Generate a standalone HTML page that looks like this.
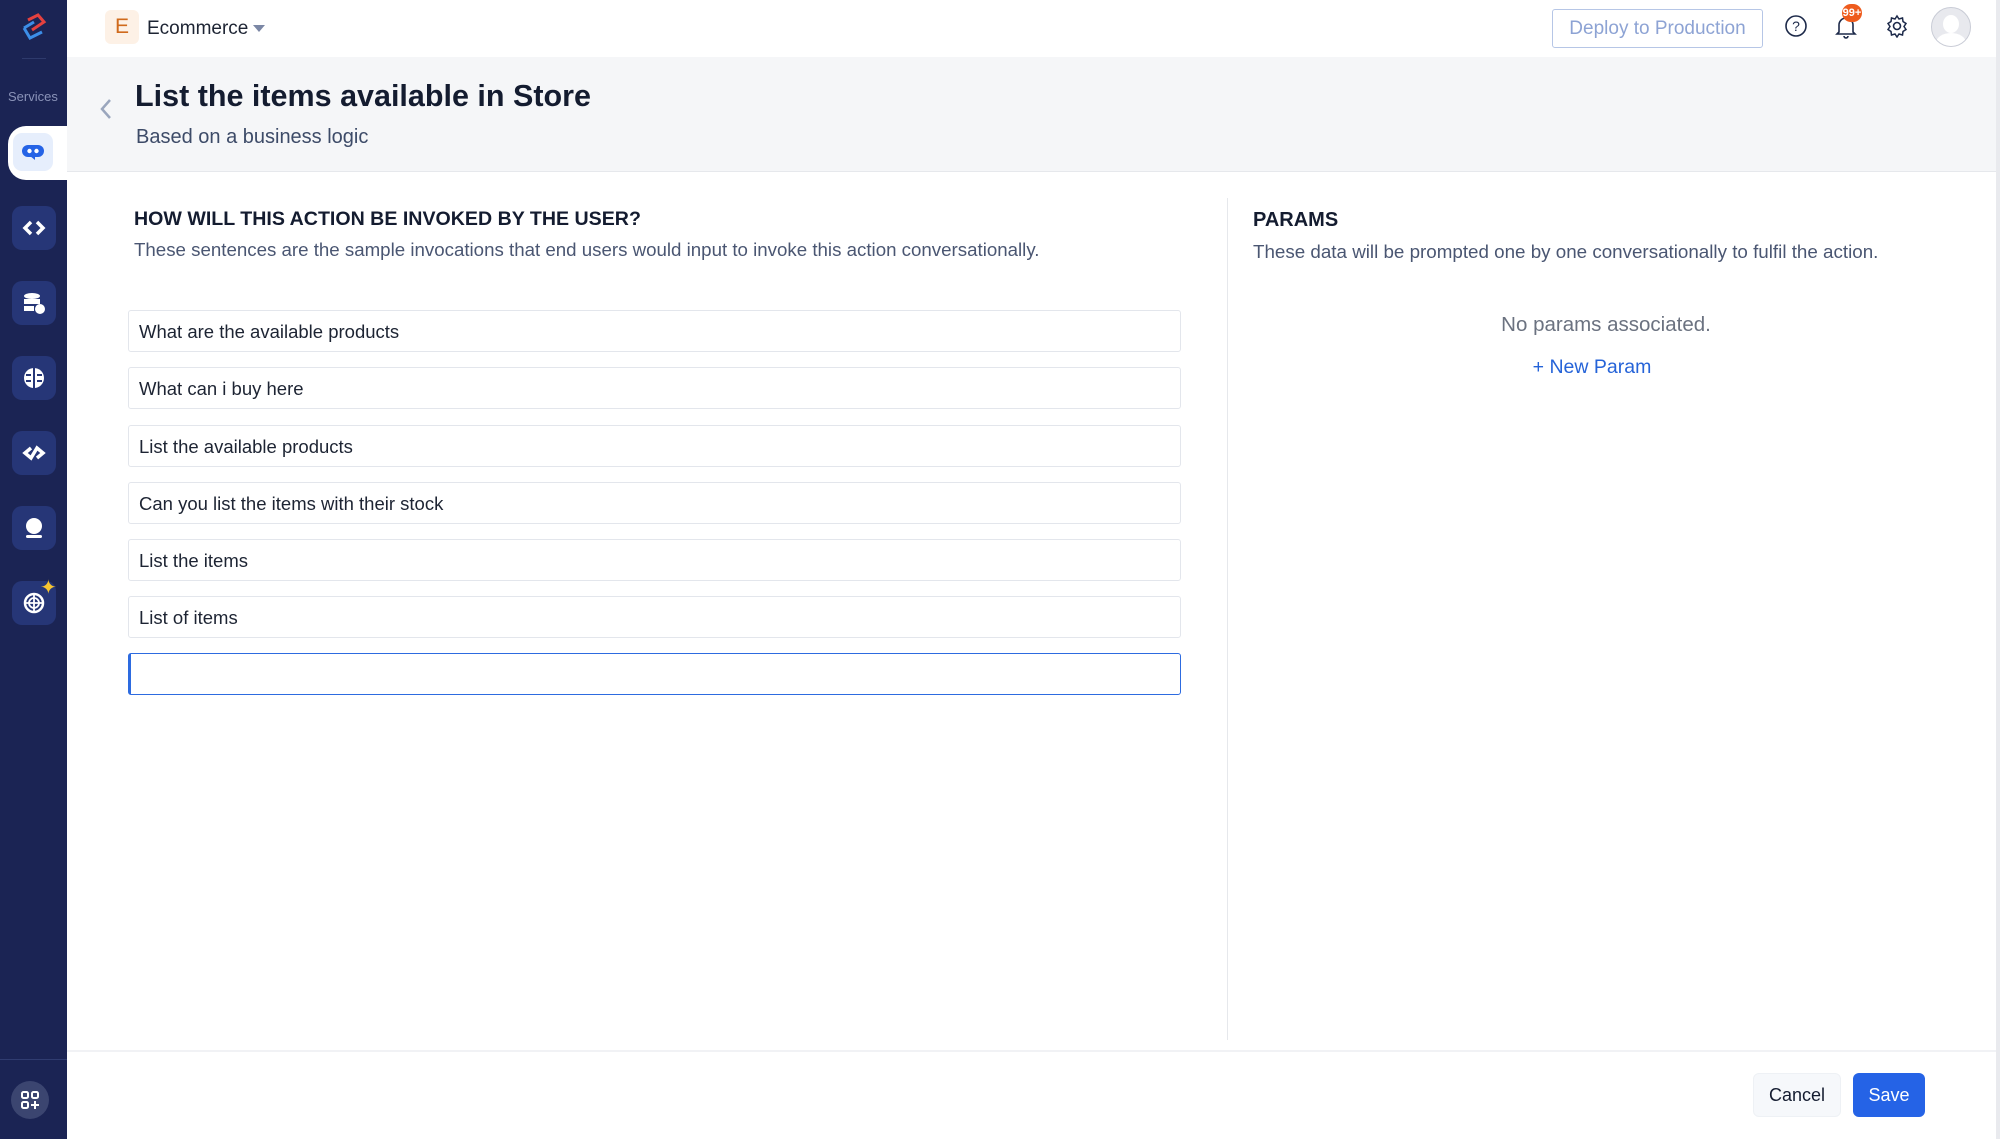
<!DOCTYPE html>
<html><head><meta charset="utf-8"><style>
*{box-sizing:border-box;margin:0;padding:0}
body{width:2000px;height:1139px;position:relative;overflow:hidden;background:#fff;font-family:"Liberation Sans",sans-serif;color:#1a2233}
.abs{position:absolute}
#side{left:0;top:0;width:67px;height:1139px;background:#1b2454}
.ib{position:absolute;left:12px;width:44px;height:44px;border-radius:10px;background:#263677;display:flex;align-items:center;justify-content:center}
.inp{position:absolute;left:128px;width:1053px;height:42px;border:1.5px solid #e3e6ec;border-radius:3px;font-size:18.5px;padding-left:10px;line-height:41px;color:#1d2433}
</style></head><body>
<div id="side" class="abs">
  <svg class="abs" style="left:18px;top:12px" width="32" height="32" viewBox="0 0 32 32"><path d="M10 8 L20 3 L26 10 L14 18" fill="none" stroke="#e4413f" stroke-width="3"/><path d="M6 16 L16 10 M6 16 L12 26 L24 20" fill="none" stroke="#3c8ee8" stroke-width="3"/></svg>
  <div class="abs" style="left:22px;top:58px;width:24px;height:1px;background:#2e3a6c"></div>
  <div class="abs" style="left:8px;top:89px;font-size:13px;color:#8a93b8">Services</div>
</div>
<div class="abs" style="left:8px;top:126px;width:60px;height:54px;background:#fff;border-radius:18px 0 0 18px"></div>
<div class="abs" style="left:13px;top:133px;width:40px;height:38px;border-radius:9px;background:#e6eefc;display:flex;align-items:center;justify-content:center">
<svg width="24" height="18" viewBox="0 0 24 18"><rect x="1" y="2" width="22" height="12" rx="6" fill="#2563e6"/><path d="M9 13 L14 17 L14 13Z" fill="#2563e6"/><circle cx="8.5" cy="8" r="2.2" fill="#fff"/><circle cx="15.5" cy="8" r="2.2" fill="#fff"/></svg></div>
<div class="ib" style="top:206px"><svg width="24" height="20" viewBox="0 0 24 20"><path d="M9 4 L3 10 L9 16 M15 4 L21 10 L15 16" fill="none" stroke="#fff" stroke-width="3.5"/></svg></div>
<div class="ib" style="top:281px"><svg width="26" height="24" viewBox="0 0 26 24"><ellipse cx="11" cy="5" rx="8" ry="3" fill="#fff"/><rect x="3" y="8" width="16" height="5" fill="#fff"/><rect x="3" y="15" width="10" height="5" fill="#fff"/><circle cx="19" cy="18" r="5" fill="#fff"/></svg></div>
<div class="ib" style="top:356px"><svg width="24" height="24" viewBox="0 0 24 24"><circle cx="12" cy="12" r="10" fill="#fff"/><path d="M12 2V22M4 9H9M15 9H20M4 15H9M15 15H20" stroke="#263677" stroke-width="2"/></svg></div>
<div class="ib" style="top:431px"><svg width="26" height="18" viewBox="0 0 26 18"><path d="M10 4 L4 9 L10 14 L16 4 L22 9 L16 14" fill="none" stroke="#fff" stroke-width="3.5"/></svg></div>
<div class="ib" style="top:506px"><svg width="24" height="24" viewBox="0 0 24 24"><circle cx="12" cy="10" r="8" fill="#fff"/><rect x="4" y="19" width="16" height="3" rx="1.5" fill="#fff"/></svg></div>
<div class="ib" style="top:581px"><svg width="24" height="24" viewBox="0 0 24 24"><circle cx="12" cy="12" r="9" fill="none" stroke="#fff" stroke-width="2.5"/><circle cx="12" cy="12" r="5" fill="none" stroke="#fff" stroke-width="1.8"/><path d="M3 12H21M12 3V21" stroke="#fff" stroke-width="1.8"/></svg></div>
<div class="abs" style="left:40px;top:575px;color:#f7c531;font-size:20px">✦</div>
<div class="abs" style="left:0;top:1059px;width:67px;height:1px;background:#303c70"></div>
<div class="abs" style="left:11px;top:1081px;width:38px;height:38px;border-radius:50%;background:#3b4570;display:flex;align-items:center;justify-content:center"><svg width="18" height="18" viewBox="0 0 18 18"><rect x="1" y="1" width="6" height="6" rx="1.5" fill="none" stroke="#fff" stroke-width="2"/><rect x="11" y="1" width="6" height="6" rx="1.5" fill="none" stroke="#fff" stroke-width="2"/><rect x="1" y="11" width="6" height="6" rx="1.5" fill="none" stroke="#fff" stroke-width="2"/><path d="M14 10V18M10 14H18" stroke="#fff" stroke-width="2"/></svg></div>

<div class="abs" style="left:105px;top:10px;width:34px;height:34px;border-radius:6px;background:#fdf1e6;color:#d06a1c;font-size:21px;text-align:center;line-height:34px">E</div>
<div class="abs" style="left:147px;top:18px;font-size:19px;color:#1d2433">Ecommerce</div>
<div class="abs" style="left:253px;top:25px;width:0;height:0;border-left:6px solid transparent;border-right:6px solid transparent;border-top:7px solid #7b87a5"></div>
<div class="abs" style="left:1552px;top:9px;width:211px;height:39px;border:1.5px solid #b6c6e6;border-radius:3px;color:#8da3d4;font-size:19px;text-align:center;line-height:38px">Deploy to Production</div>
<svg class="abs" style="left:1784px;top:14px" width="24" height="24" viewBox="0 0 24 24"><circle cx="12" cy="12" r="10" fill="none" stroke="#1d2a4a" stroke-width="1.6"/><text x="12" y="17" text-anchor="middle" font-size="14" font-family="Liberation Sans" fill="#1d2a4a">?</text></svg>
<svg class="abs" style="left:1834px;top:14px" width="24" height="26" viewBox="0 0 24 26"><path d="M5 18V11a7 7 0 0 1 14 0v7l2 2H3z M10 22a2 2 0 0 0 4 0" fill="none" stroke="#1d2a4a" stroke-width="1.6"/></svg>
<div class="abs" style="left:1842px;top:4px;width:20px;height:18px;border-radius:9px;background:#ee5b1d;color:#fff;font-size:11px;font-weight:bold;text-align:center;line-height:18px">99+</div>
<svg class="abs" style="left:1885px;top:14px" width="24" height="24" viewBox="0 0 24 24"><circle cx="12" cy="12" r="3.5" fill="none" stroke="#1d2a4a" stroke-width="1.6"/><path d="M12 2l2 3 3.5-1 .5 3.5 3 2-2 3 2 3-3 2-.5 3.5-3.5-1-2 3-2-3-3.5 1-.5-3.5-3-2 2-3-2-3 3-2 .5-3.5 3.5 1z" fill="none" stroke="#1d2a4a" stroke-width="1.5"/></svg>
<div class="abs" style="left:1931px;top:7px;width:40px;height:40px;border-radius:50%;background:#e8e9ee;border:1.5px solid #c9ccd6;overflow:hidden"><div class="abs" style="left:11px;top:7px;width:16px;height:18px;border-radius:50%;background:#fff"></div><div class="abs" style="left:4px;top:25px;width:30px;height:20px;border-radius:50%;background:#fff"></div></div>

<div class="abs" style="left:67px;top:57px;width:1929px;height:115px;background:#f5f6f8;border-bottom:1px solid #e6e8ec"></div>
<svg class="abs" style="left:97px;top:97px" width="18" height="24" viewBox="0 0 18 24"><path d="M13 3 L5 12 L13 21" fill="none" stroke="#9aa6bd" stroke-width="2.5"/></svg>
<div class="abs" style="left:135px;top:79px;font-size:30.5px;font-weight:bold;color:#141c30">List the items available in Store</div>
<div class="abs" style="left:136px;top:126px;font-size:20px;color:#3d4b68">Based on a business logic</div>
<div class="abs" style="left:1996px;top:0;width:4px;height:1139px;background:#e9eaee"></div>

<div class="abs" style="left:134px;top:208px;font-size:19.6px;font-weight:bold;color:#141c30">HOW WILL THIS ACTION BE INVOKED BY THE USER?</div>
<div class="abs" style="left:134px;top:239px;font-size:18.7px;color:#4a5672">These sentences are the sample invocations that end users would input to invoke this action conversationally.</div>
<div class="inp" style="top:310px">What are the available products</div>
<div class="inp" style="top:367px">What can i buy here</div>
<div class="inp" style="top:425px">List the available products</div>
<div class="inp" style="top:482px">Can you list the items with their stock</div>
<div class="inp" style="top:539px">List the items</div>
<div class="inp" style="top:596px">List of items</div>
<div class="inp" style="top:653px;border-color:#2d6be0;border-left-width:3px"></div>
<div class="abs" style="left:1227px;top:198px;width:1px;height:842px;background:#e6e8ec"></div>

<div class="abs" style="left:1253px;top:209px;font-size:20px;font-weight:bold;color:#141c30">PARAMS</div>
<div class="abs" style="left:1253px;top:241px;font-size:18.8px;color:#4a5672">These data will be prompted one by one conversationally to fulfil the action.</div>
<div class="abs" style="left:1406px;top:313px;width:400px;text-align:center;font-size:20.5px;color:#6b7280">No params associated.</div>
<div class="abs" style="left:1492px;top:356px;width:200px;text-align:center;font-size:19.5px;color:#2563d8">+ New Param</div>

<div class="abs" style="left:67px;top:1050px;width:1929px;height:2px;background:#f1f2f5"></div>
<div class="abs" style="left:1753px;top:1073px;width:88px;height:44px;border-radius:6px;background:#f6f8fb;border:1px solid #eef1f5;font-size:18px;text-align:center;line-height:42px;color:#141c30">Cancel</div>
<div class="abs" style="left:1853px;top:1073px;width:72px;height:44px;border-radius:6px;background:#2563e6;font-size:18px;text-align:center;line-height:44px;color:#fff">Save</div>
</body></html>
